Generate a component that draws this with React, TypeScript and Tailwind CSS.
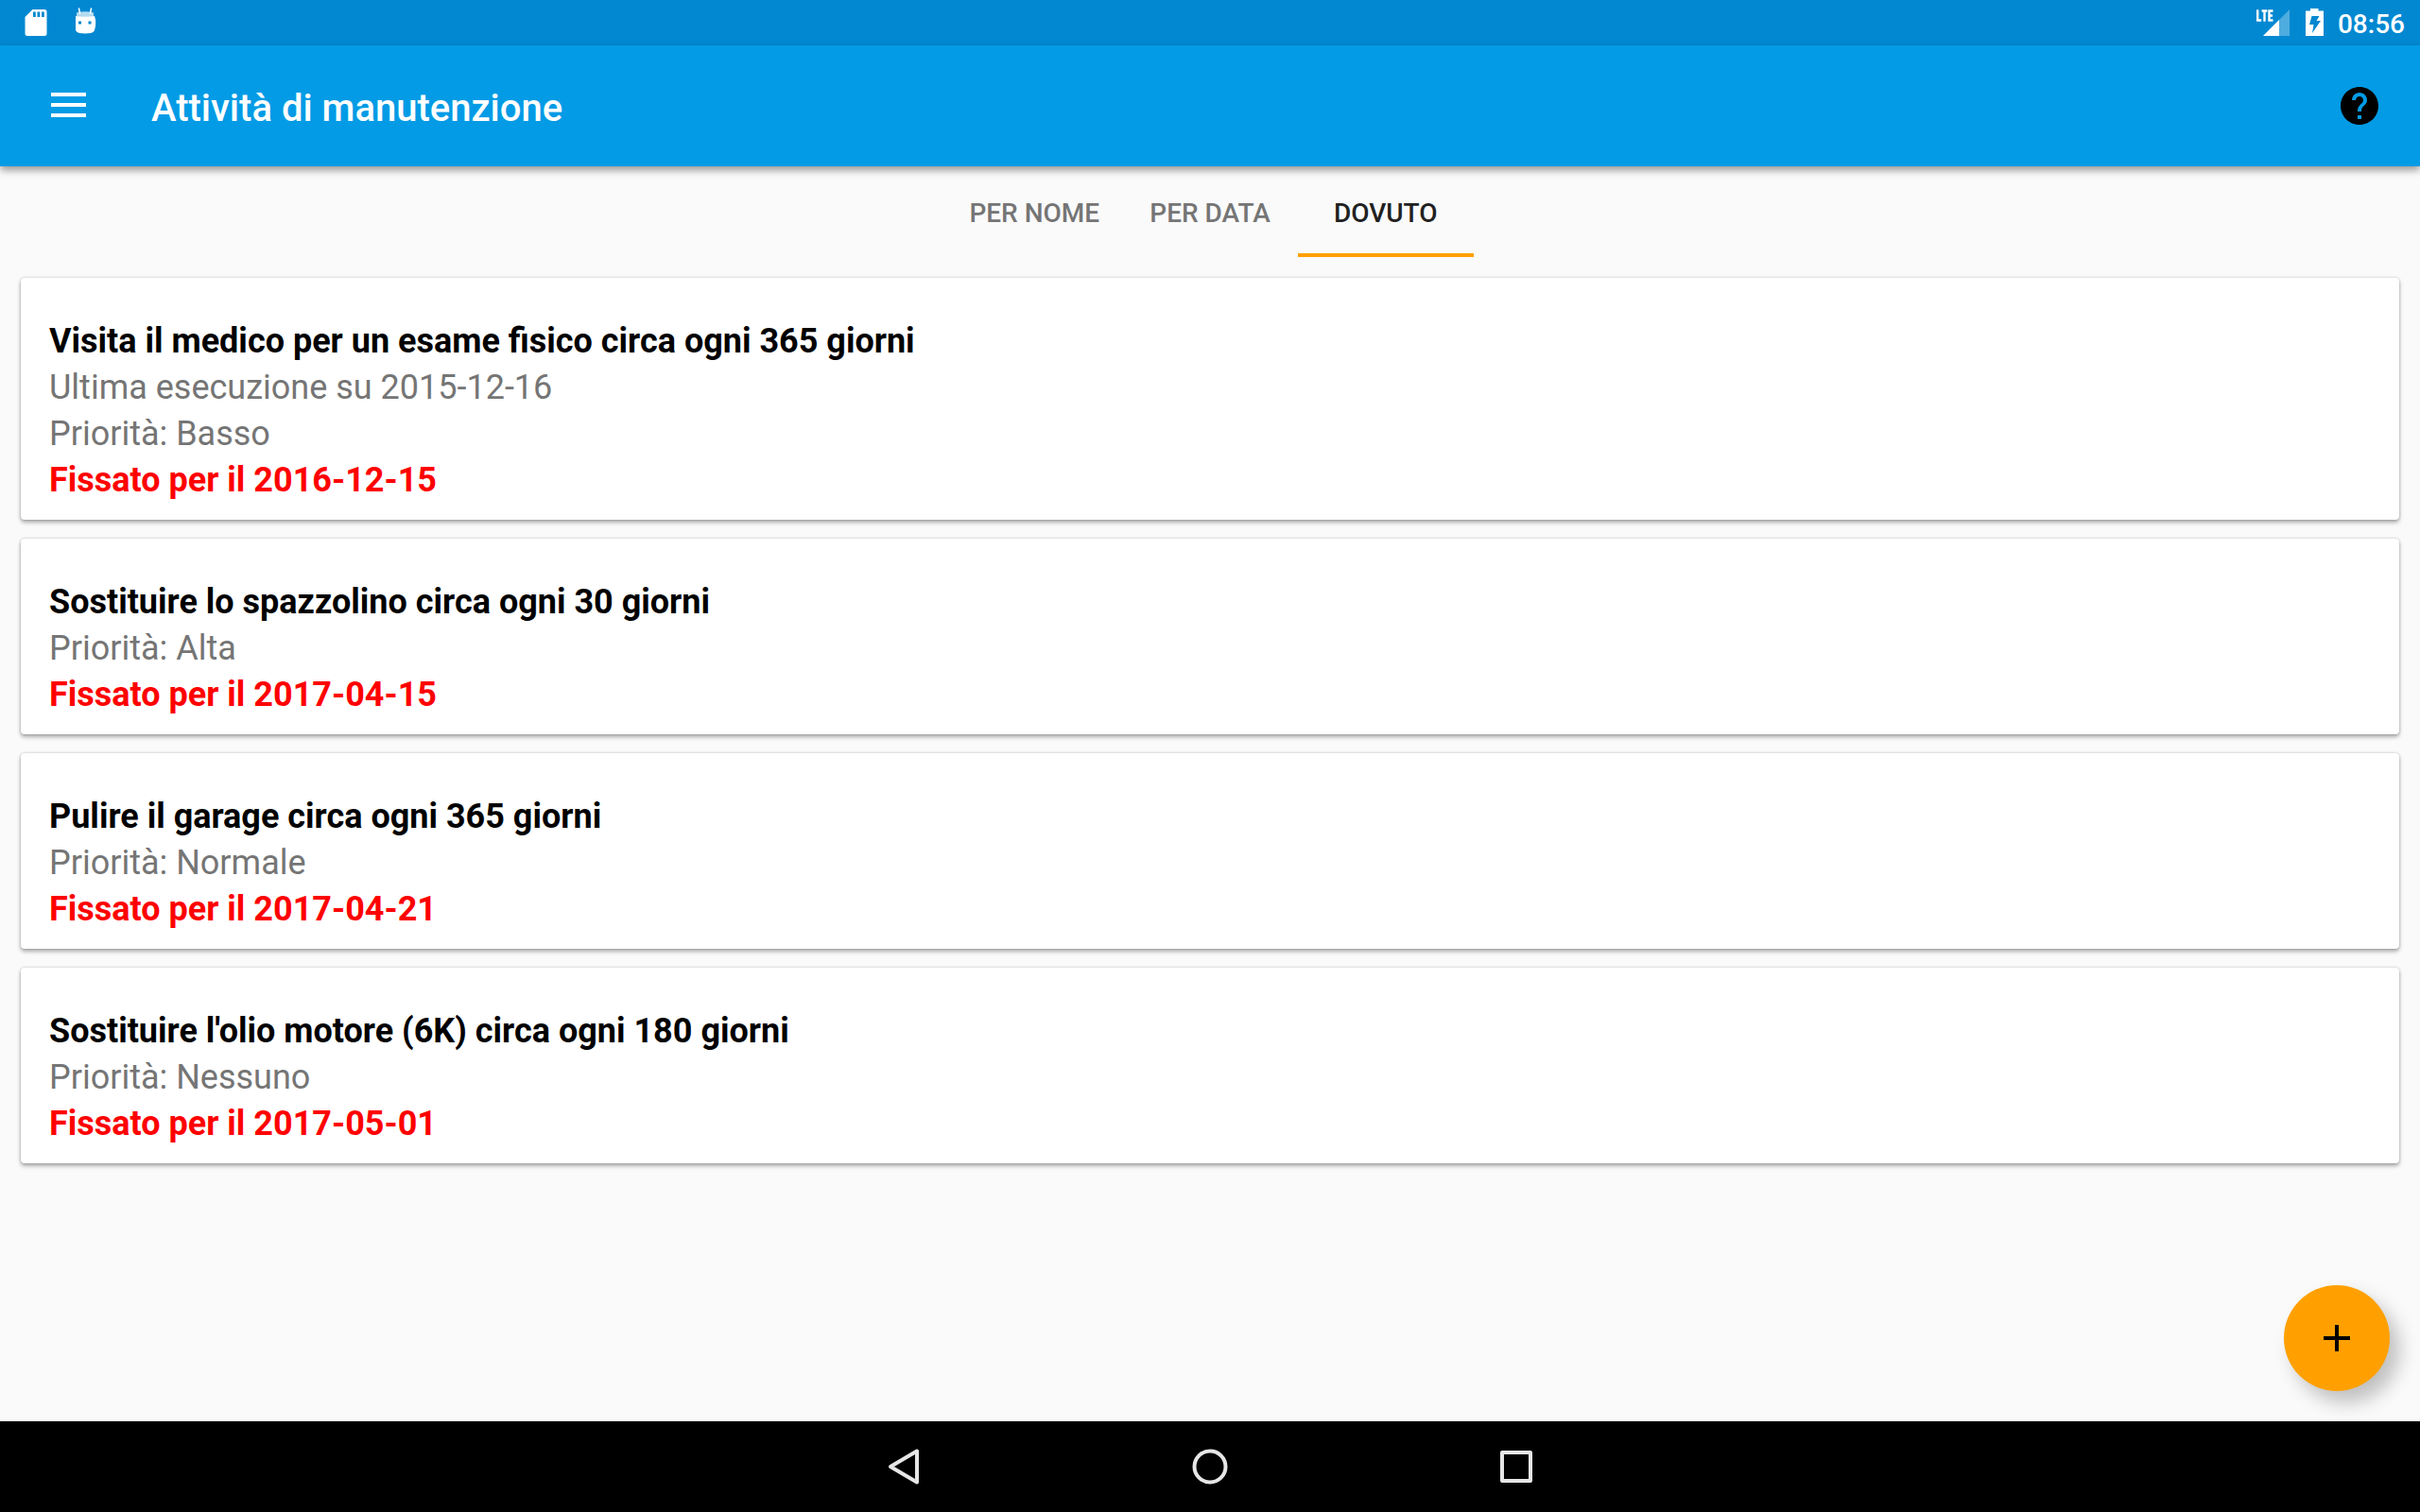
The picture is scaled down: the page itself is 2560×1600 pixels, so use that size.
import React from "react";

type Task = { title: string; details: string[]; due: string };

const tasks: Task[] = [
  {
    title: "Visita il medico per un esame fisico circa ogni 365 giorni",
    details: ["Ultima esecuzione su 2015-12-16", "Priorità: Basso"],
    due: "Fissato per il 2016-12-15",
  },
  {
    title: "Sostituire lo spazzolino circa ogni 30 giorni",
    details: ["Priorità: Alta"],
    due: "Fissato per il 2017-04-15",
  },
  {
    title: "Pulire il garage circa ogni 365 giorni",
    details: ["Priorità: Normale"],
    due: "Fissato per il 2017-04-21",
  },
  {
    title: "Sostituire l'olio motore (6K) circa ogni 180 giorni",
    details: ["Priorità: Nessuno"],
    due: "Fissato per il 2017-05-01",
  },
];

const tabs = ["PER NOME", "PER DATA", "DOVUTO"];

function StatusBar() {
  return (
    <div className="flex h-12 items-center justify-between bg-[#0288d1] pr-4 text-white">
      <div className="flex items-center">
        <svg className="h-12 w-20" viewBox="0 0 80 48" fill="currentColor" aria-hidden="true">
          <path
            fillRule="evenodd"
            d="M34.500 10h12.500a2.500 2.500 0 0 1 2.500 2.500v23a2.500 2.500 0 0 1-2.500 2.500h-18a2.500 2.500 0 0 1-2.500-2.500v-17.500zM35 12.500v5.500h2.800v-5.500zM39.500 12.500v5.500h2.800v-5.500zM44 12.500v5.500h2.800v-5.500z"
          />
        </svg>
        <svg className="h-12 w-8" viewBox="80 0 32 48" fill="currentColor" aria-hidden="true">
          <path d="M83.500 9l1 5M96.500 9l-1 5" stroke="currentColor" strokeWidth="1.500" strokeLinecap="round" />
          <path d="M81 13.500q9-2.500 18 0v4q-9 2-18 0z" opacity=".7" />
          <path
            fillRule="evenodd"
            d="M80 17q10 1.500 20 0q2.500 7 0 15q-1 2.500-4 3q-6 .8-12 0q-3-.5-4-3q-2.500-8 0-15zM83 22.500v3h3v-3zM93.500 22.500v3h3v-3z"
          />
        </svg>
      </div>
      <div className="flex items-center">
        <svg className="h-12 w-10" viewBox="0 0 40 48" fill="currentColor" aria-hidden="true">
          <path d="M37 10v28H9z" opacity=".3" />
          <path d="M26 21v17H9z" />
          <path
            d="M3.200 10.200v11.300h4M7.600 11.500h5.800M10.500 11v11.700M19.500 11.500h-4v10h4M15.500 16.500h3.500"
            fill="none"
            stroke="currentColor"
            strokeWidth="2.400"
          />
        </svg>
        <svg className="size-12" viewBox="-2 0 48 48" fill="currentColor" aria-hidden="true">
          <path fillRule="evenodd" d="M17 9h8.500v2.500H31V38H12V11.500h5zM18.500 17L16 26h4.500l-1.500 9L28 22h-4.500l3-5z" />
        </svg>
        <time className="pt-[3px] text-[28px] leading-8 font-medium">08:56</time>
      </div>
    </div>
  );
}

function AppBar() {
  return (
    <header className="relative flex h-32 items-center justify-between bg-[#039be5] pr-10 pl-12 text-white shadow-[0_4px_8px_rgba(0,0,0,0.4)]">
      <div className="flex items-center gap-16">
        <button type="button" aria-label="Menu" className="size-12">
          <svg className="size-12" viewBox="0 0 48 48" fill="currentColor" aria-hidden="true">
            <path d="M6 10h37v4H6zM6 21h37v4H6zM6 32h37v4H6z" />
          </svg>
        </button>
        <h1 className="pt-[5px] text-[40px] leading-12 font-medium">Attività di manutenzione</h1>
      </div>
      <button type="button" aria-label="Aiuto" className="size-12">
        <svg className="size-12" viewBox="0 0 24 24" fill="#000" aria-hidden="true">
          <path d="M12 2C6.480 2 2 6.480 2 12s4.480 10 10 10 10-4.480 10-10S17.520 2 12 2zm1 17h-2v-2h2v2zm2.070-7.750l-.9.920C13.450 12.900 13 13.500 13 15h-2v-.5c0-1.100.45-2.100 1.170-2.830l1.240-1.260c.37-.36.590-.86.590-1.410 0-1.100-.9-2-2-2s-2 .9-2 2H8c0-2.210 1.790-4 4-4s4 1.790 4 4c0 .88-.36 1.680-.93 2.250z" />
        </svg>
      </button>
    </header>
  );
}

function TaskCard({ task }: { task: Task }) {
  return (
    <li className="rounded-[4px] bg-white px-[30px] pt-[43px] pb-[17px] text-4xl leading-[49px] text-[#757575] shadow-[0_3px_4px_rgba(0,0,0,0.3),0_0_3px_rgba(0,0,0,0.22)]">
      <h2 className="font-bold text-black">{task.title}</h2>
      {task.details.map((line) => (
        <p key={line}>{line}</p>
      ))}
      <p className="font-bold text-[#ff0000]">{task.due}</p>
    </li>
  );
}

function NavBar() {
  return (
    <nav className="flex h-24 items-center justify-center gap-[276px] bg-black text-[#e6e6e6]">
      <button type="button" aria-label="Indietro" className="size-12">
        <svg className="size-12" viewBox="0 0 48 48" fill="none" stroke="currentColor" strokeWidth="4" strokeLinejoin="round" aria-hidden="true">
          <path d="M38 7.500v33L10 24z" />
        </svg>
      </button>
      <button type="button" aria-label="Home" className="size-12">
        <svg className="size-12" viewBox="0 0 48 48" fill="none" stroke="currentColor" strokeWidth="4" aria-hidden="true">
          <circle cx="24" cy="24" r="16.500" />
        </svg>
      </button>
      <button type="button" aria-label="Recenti" className="size-12">
        <svg className="size-12" viewBox="0 0 48 48" fill="none" stroke="currentColor" strokeWidth="4" strokeLinejoin="round" aria-hidden="true">
          <path d="M9 9h30v30H9z" />
        </svg>
      </button>
    </nav>
  );
}

export default function App() {
  return (
    <div className="flex min-h-screen flex-col bg-[#fafafa] font-[Roboto,sans-serif]">
      <StatusBar />
      <AppBar />
      <main className="relative flex-1">
        <div role="tablist" className="mx-auto grid h-24 w-fit grid-cols-3">
          {tabs.map((tab, i) => (
            <button
              key={tab}
              type="button"
              role="tab"
              aria-selected={i === 2}
              className="border-b-4 border-transparent px-6 pt-2 text-[28px] leading-8 font-medium text-[#757575] aria-selected:border-[#ffa000] aria-selected:text-[#212121]"
            >
              {tab}
            </button>
          ))}
        </div>
        <ul className="mx-[22px] mt-[22px] flex flex-col gap-5">
          {tasks.map((task) => (
            <TaskCard key={task.title} task={task} />
          ))}
        </ul>
        <button
          type="button"
          aria-label="Aggiungi"
          className="absolute right-8 bottom-8 flex size-28 items-center justify-center rounded-full bg-[#ffa000] shadow-[10px_12px_20px_rgba(0,0,0,0.24)]"
        >
          <svg className="size-12" viewBox="0 0 24 24" aria-hidden="true">
            <path d="M19 13h-6v6h-2v-6H5v-2h6V5h2v6h6v2z" />
          </svg>
        </button>
      </main>
      <NavBar />
    </div>
  );
}
